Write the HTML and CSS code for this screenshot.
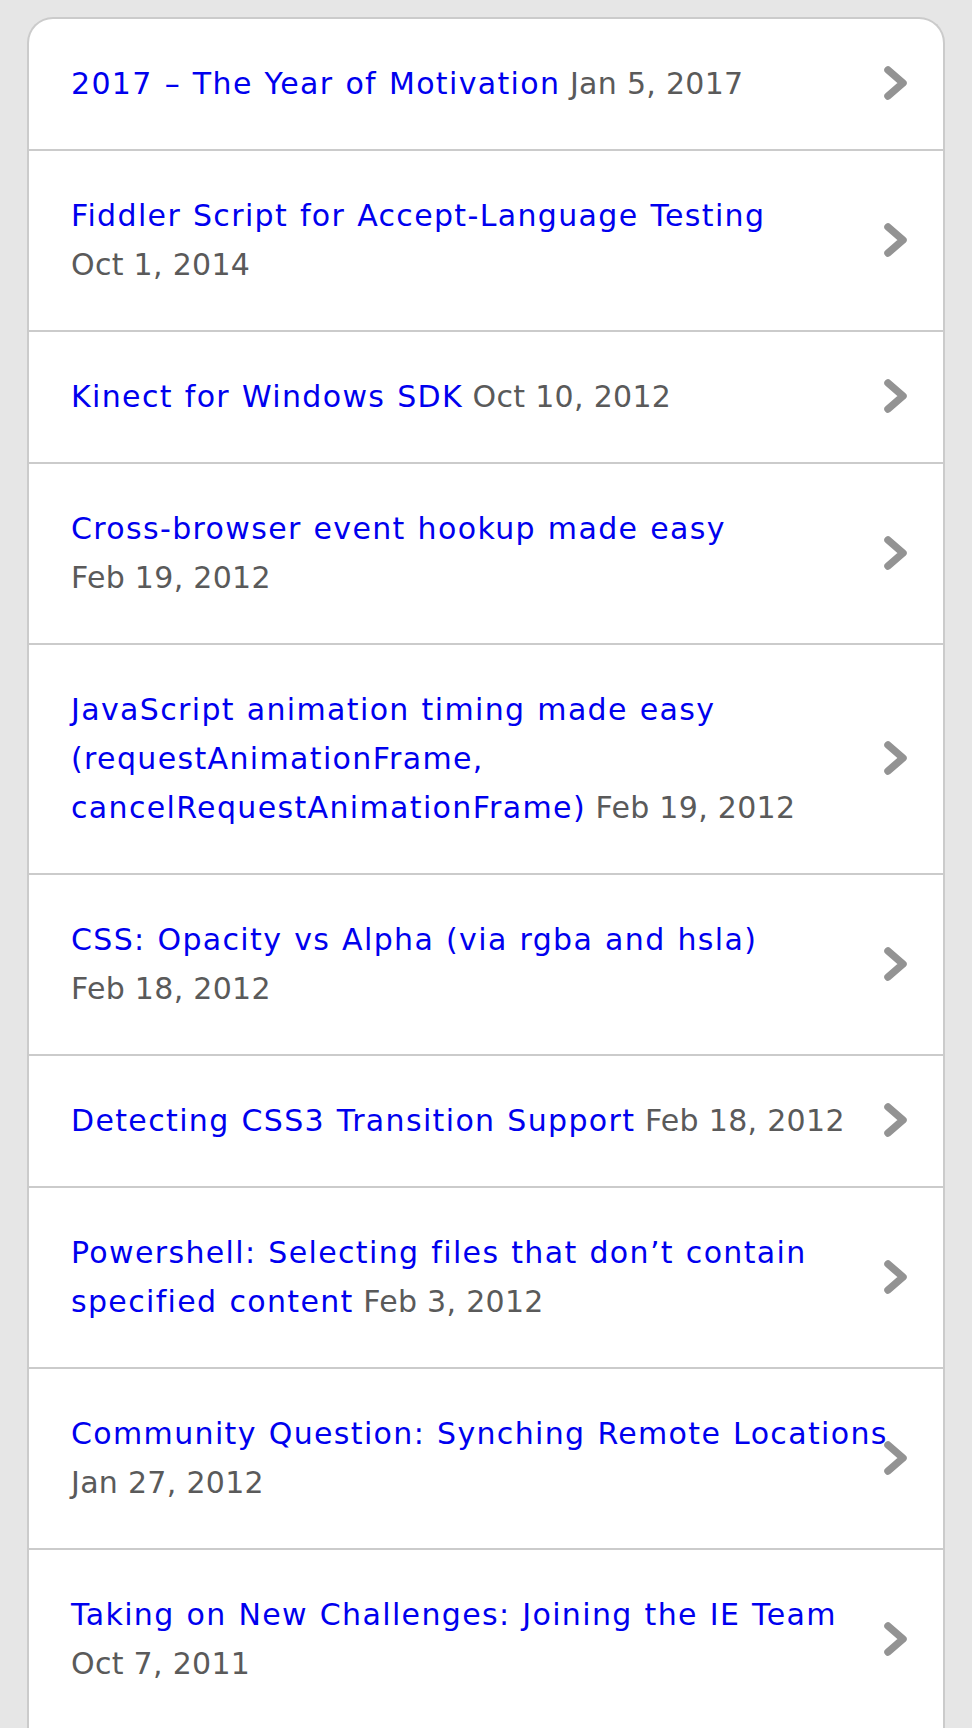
FILE: index.html
```html
<!DOCTYPE html>
<html lang="en">
<head>
<meta charset="utf-8">
<title>Posts</title>
<link rel="stylesheet" href="styles.css">
</head>
<body>
<ul class="list">
  <li class="item"><a class="title" href="#">2017 – The Year of Motivation</a> <span class="date">Jan 5, 2017</span><svg class="chev" viewBox="0 0 26 36" aria-hidden="true"><polyline points="5,5 20,18 5,31"/></svg></li>
  <li class="item"><a class="title" href="#">Fiddler Script for Accept-Language Testing</a> <span class="date">Oct 1, 2014</span><svg class="chev" viewBox="0 0 26 36" aria-hidden="true"><polyline points="5,5 20,18 5,31"/></svg></li>
  <li class="item"><a class="title" href="#">Kinect for Windows SDK</a> <span class="date">Oct 10, 2012</span><svg class="chev" viewBox="0 0 26 36" aria-hidden="true"><polyline points="5,5 20,18 5,31"/></svg></li>
  <li class="item"><a class="title" href="#">Cross-browser event hookup made easy</a> <span class="date">Feb 19, 2012</span><svg class="chev" viewBox="0 0 26 36" aria-hidden="true"><polyline points="5,5 20,18 5,31"/></svg></li>
  <li class="item"><a class="title" href="#">JavaScript animation timing made easy (requestAnimationFrame, cancelRequestAnimationFrame)</a> <span class="date">Feb 19, 2012</span><svg class="chev" viewBox="0 0 26 36" aria-hidden="true"><polyline points="5,5 20,18 5,31"/></svg></li>
  <li class="item"><a class="title" href="#">CSS: Opacity vs Alpha (via rgba and hsla)</a> <span class="date">Feb 18, 2012</span><svg class="chev" viewBox="0 0 26 36" aria-hidden="true"><polyline points="5,5 20,18 5,31"/></svg></li>
  <li class="item"><a class="title" href="#">Detecting CSS3 Transition Support</a> <span class="date">Feb 18, 2012</span><svg class="chev" viewBox="0 0 26 36" aria-hidden="true"><polyline points="5,5 20,18 5,31"/></svg></li>
  <li class="item"><a class="title" href="#">Powershell: Selecting files that don’t contain specified content</a> <span class="date">Feb 3, 2012</span><svg class="chev" viewBox="0 0 26 36" aria-hidden="true"><polyline points="5,5 20,18 5,31"/></svg></li>
  <li class="item"><a class="title" href="#">Community Question: Synching Remote Locations</a> <span class="date">Jan 27, 2012</span><svg class="chev" viewBox="0 0 26 36" aria-hidden="true"><polyline points="5,5 20,18 5,31"/></svg></li>
  <li class="item"><a class="title" href="#">Taking on New Challenges: Joining the IE Team</a> <span class="date">Oct 7, 2011</span><svg class="chev" viewBox="0 0 26 36" aria-hidden="true"><polyline points="5,5 20,18 5,31"/></svg></li>
</ul>
</body>
</html>
```
FILE: styles.css
```css
html, body {
  margin: 0;
  padding: 0;
  background: #e6e6e6;
}
body {
  font-family: "DejaVu Sans", Verdana, sans-serif;
  font-size: 30px;
  line-height: 49px;
}
.list {
  list-style: none;
  margin: 17px 27px 0;
  padding: 0;
  background: #fff;
  border: 2px solid #cbcbcb;
  border-bottom: none;
  border-radius: 26px 26px 0 0;
}
.item {
  position: relative;
  padding: 40px 42px 41px;
  border-top: 2px solid #cbcbcb;
}
.item:first-child {
  border-top: none;
}
.title {
  color: #0000ee;
  text-decoration: none;
  letter-spacing: 1.35px;
  word-spacing: 1px;
}
.date {
  color: #5a5a5a;
  white-space: nowrap;
  letter-spacing: 0.3px;
}
.chev {
  position: absolute;
  right: 34px;
  top: 50%;
  width: 26px;
  height: 36px;
  margin-top: -19px;
  fill: none;
  stroke: #939393;
  stroke-width: 7.5;
  stroke-linecap: round;
  stroke-linejoin: round;
}
```
